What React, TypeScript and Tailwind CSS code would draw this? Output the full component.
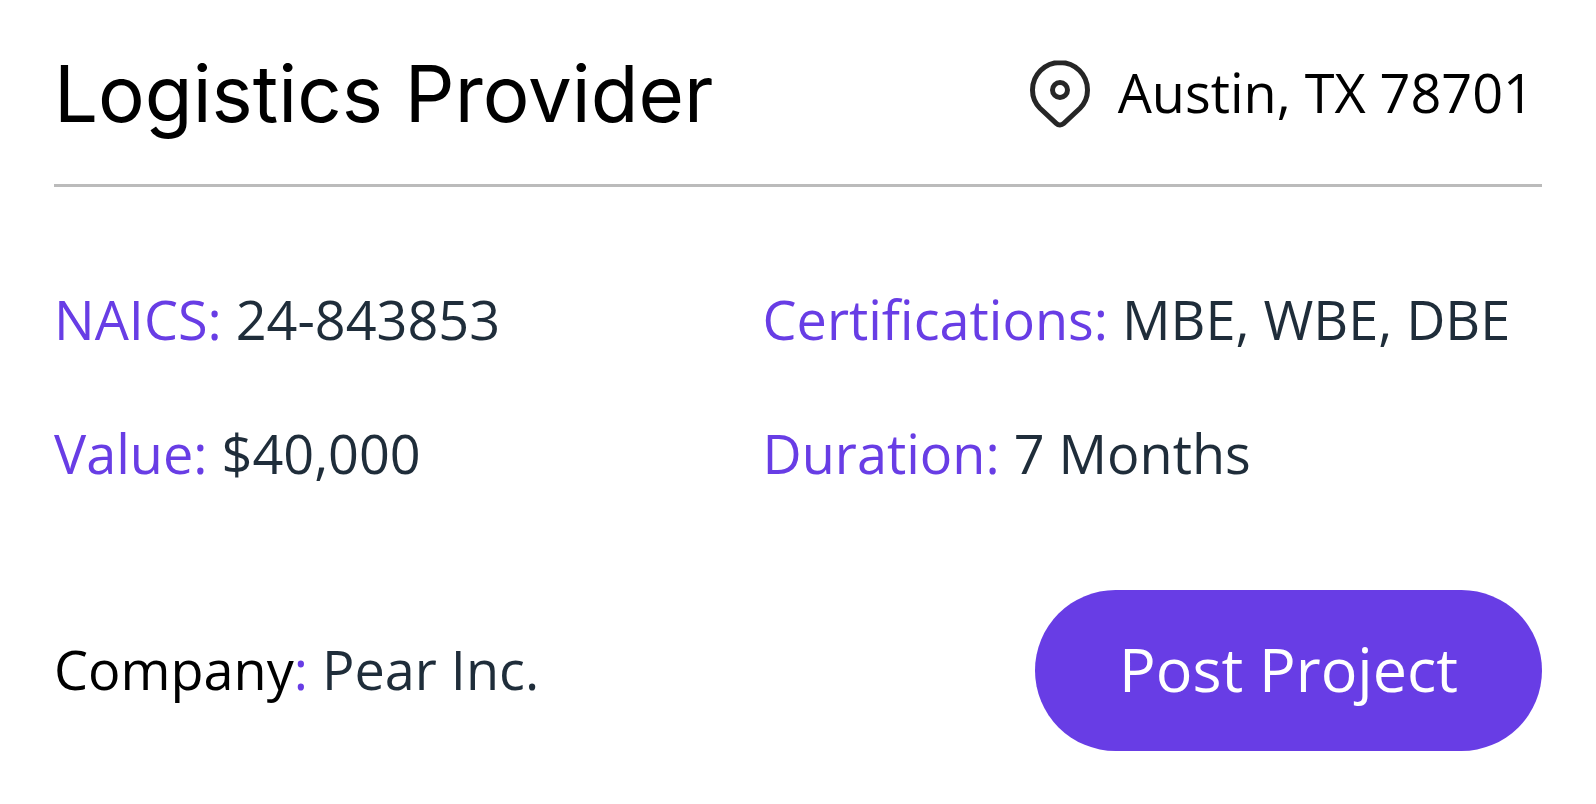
type FieldProps = {
  label: string;
  value: string;
};

function PinIcon() {
  return (
    <svg
      viewBox="0 0 60 68"
      fill="none"
      stroke="#262626"
      strokeWidth="5"
      className="h-[68px] w-[60px] shrink-0"
      aria-hidden="true"
    >
      <path d="M30 2.5C14.8 2.5 2.5 14.8 2.5 30C2.5 37.5 5.4 43.6 10 48.2L26.2 63.4C28.4 65.4 31.6 65.4 33.8 63.4L50 48.2C54.6 43.6 57.5 37.5 57.5 30C57.5 14.8 45.2 2.5 30 2.5Z" />
      <circle cx="30" cy="30" r="7.5" />
    </svg>
  );
}

function Field({ label, value }: FieldProps) {
  return (
    <div className="whitespace-nowrap">
      <dt className="inline font-medium text-[#683de5]">{label}:</dt>{" "}
      <dd className="inline">{value}</dd>
    </div>
  );
}

export default function App() {
  return (
    <article className="bg-white px-[54px] pt-[48px] pb-[52px] font-['Open_Sans',sans-serif] text-[54px] leading-[64px] text-[#1f2d3a]">
      <header className="flex items-center justify-between border-b-3 border-[#bbbbbb] pb-[44px] text-black">
        <h1 className="font-['Inter',sans-serif] text-[78px] leading-[92px] whitespace-nowrap">
          Logistics Provider
        </h1>
        <p className="flex items-start gap-7 pr-2 font-medium whitespace-nowrap">
          <PinIcon />
          Austin, TX 78701
        </p>
      </header>

      <dl className="mt-[100px] grid grid-cols-[10fr_11fr] gap-y-[70px]">
        <Field label="NAICS" value="24-843853" />
        <Field label="Certifications" value="MBE, WBE, DBE" />
        <Field label="Value" value="$40,000" />
        <Field label="Duration" value="7 Months" />
      </dl>

      <footer className="mt-[105px] flex items-center justify-between">
        <p className="pb-1 whitespace-nowrap">
          <span className="font-medium text-black">Company</span>
          <span className="text-[#683de5]">:</span> Pear Inc.
        </p>
        <button
          type="button"
          className="h-[161px] rounded-full bg-[#683de5] px-[84px] pb-1 text-[61px] font-medium text-white"
        >
          Post Project
        </button>
      </footer>
    </article>
  );
}
